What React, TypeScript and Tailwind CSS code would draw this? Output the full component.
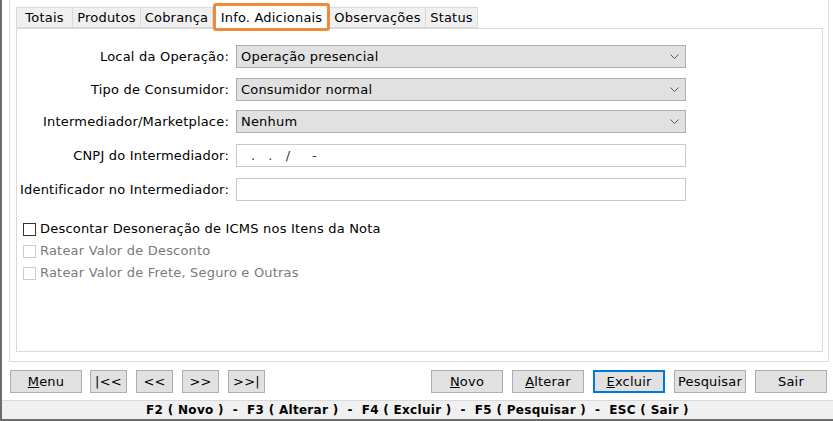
import React from 'react'

const font = { fontFamily: '"DejaVu Sans", Verdana, sans-serif' }

function Chevron() {
  return (
    <svg width="9" height="5" viewBox="0 0 9 5" className="shrink-0">
      <polyline points="0.5,0.5 4.5,4.5 8.5,0.5" fill="none" stroke="#555" strokeWidth="1" />
    </svg>
  )
}

function SelectRow({ label, value, mt }: { label: string; value: string; mt: string }) {
  return (
    <div className={`flex items-center ${mt}`}>
      <div className="w-[213px] text-right pr-[1px]">{label}</div>
      <div className="ml-[6px] w-[450px] h-[23px] bg-[#e1e1e1] border border-[#adadad] flex items-center justify-between pl-[4px] pr-[6px]">
        <span>{value}</span>
        <Chevron />
      </div>
    </div>
  )
}

function InputRow({ label, value, mt }: { label: string; value?: string; mt: string }) {
  return (
    <div className={`flex items-center ${mt}`}>
      <div className="w-[213px] text-right pr-[1px]">{label}</div>
      <div className="ml-[6px] w-[450px] h-[23px] bg-white border border-[#c8c8c8] flex items-center pl-[14px] whitespace-pre text-[#333]">
        {value}
      </div>
    </div>
  )
}

function Check({ label, disabled }: { label: string; disabled?: boolean }) {
  return (
    <div className={`flex items-center h-[22px] ${disabled ? 'text-[#7a7a7a]' : 'text-black'}`}>
      <div className={`w-[13px] h-[13px] border bg-white ${disabled ? 'border-[#cccccc]' : 'border-[#333333]'}`} />
      <span className="ml-[4px]">{label}</span>
    </div>
  )
}

function Btn({ children, w = 'w-[72px]', primary }: { children: React.ReactNode; w?: string; primary?: boolean }) {
  return (
    <div
      className={`${w} h-[23px] flex items-center justify-center bg-[#e1e1e1] ${
        primary ? 'border-2 border-[#0078d7]' : 'border border-[#adadad]'
      }`}
    >
      {children}
    </div>
  )
}

const tabs: { t: string; w: string }[] = [
  { t: 'Totais', w: 'w-[57px]' },
  { t: 'Produtos', w: 'w-[69px]' },
  { t: 'Cobrança', w: 'w-[73px]' },
  { t: 'Info. Adicionais', w: 'w-[117px]' },
  { t: 'Observações', w: 'w-[97px]' },
  { t: 'Status', w: 'w-[53px]' },
]

export default function App() {
  return (
    <div className="w-[833px] h-[421px] bg-white border-l-2 border-b-2 border-[#6b6b6b] flex flex-col text-[13px] tracking-[0.2px] text-black overflow-hidden" style={font}>
      {/* outer panel */}
      <div className="ml-[7px] w-[820px] h-[362px] border-x border-b border-[#dcdcdc] pl-[6px] pr-[5px] pt-[7px] flex flex-col">
        {/* tab strip */}
        <div className="flex items-end h-[21px] relative">
          {tabs.map(({ t, w }) =>
            t === 'Info. Adicionais' ? (
              <div key={t} className={`relative ${w} h-[24px] -mb-[1px] bg-white border-x border-t border-[#d9d9d9] flex justify-center items-start pt-[2px] z-10`}>
                {t}
                <div className="absolute -left-[1px] -right-[1px] -top-[3px] -bottom-[2px] border-[3px] border-[#ef8a3a] rounded-[3px]" />
              </div>
            ) : (
              <div key={t} className={`${w} h-[21px] bg-[#f0f0f0] border border-[#d9d9d9] -ml-[1px] first:ml-0 flex justify-center items-center pt-[1px]`}>
                {t}
              </div>
            )
          )}
        </div>
        {/* content */}
        <div className="flex-1 bg-white border border-[#d9d9d9] mb-[9px] pt-[16px]">
          <SelectRow label="Local da Operação:" value="Operação presencial" mt="" />
          <SelectRow label="Tipo de Consumidor:" value="Consumidor normal" mt="mt-[10px]" />
          <SelectRow label="Intermediador/Marketplace:" value="Nenhum" mt="mt-[9px]" />
          <InputRow label="CNPJ do Intermediador:" value={'.   .   /     -'} mt="mt-[11px]" />
          <InputRow label="Identificador no Intermediador:" mt="mt-[11px]" />
          <div className="pl-[6px] mt-[17px]">
            <Check label="Descontar Desoneração de ICMS nos Itens da Nota" />
            <Check label="Ratear Valor de Desconto" disabled />
            <Check label="Ratear Valor de Frete, Seguro e Outras" disabled />
          </div>
        </div>
      </div>

      {/* buttons */}
      <div className="flex items-center justify-between mt-[8px] pl-[8px] pr-[6px]">
        <div className="flex gap-[8px]">
          <Btn><span><u>M</u>enu</span></Btn>
          <div className="flex gap-[9px]">
            <Btn w="w-[37px]">|&lt;&lt;</Btn>
            <Btn w="w-[37px]">&lt;&lt;</Btn>
            <Btn w="w-[37px]">&gt;&gt;</Btn>
            <Btn w="w-[37px]">&gt;&gt;|</Btn>
          </div>
        </div>
        <div className="flex gap-[9px]">
          <Btn><span><u>N</u>ovo</span></Btn>
          <Btn><span><u>A</u>lterar</span></Btn>
          <Btn primary><span><u>E</u>xcluir</span></Btn>
          <Btn>Pesquisar</Btn>
          <Btn>Sair</Btn>
        </div>
      </div>

      {/* status bar */}
      <div className="mt-auto h-[19px] bg-[#f0f0f0] border-t border-[#dadada] flex items-center justify-center font-bold text-[12px] tracking-[0.3px] whitespace-pre">
        F2 ( Novo )  -  F3 ( Alterar )  -  F4 ( Excluir )  -  F5 ( Pesquisar )  -  ESC ( Sair )
      </div>
    </div>
  )
}
